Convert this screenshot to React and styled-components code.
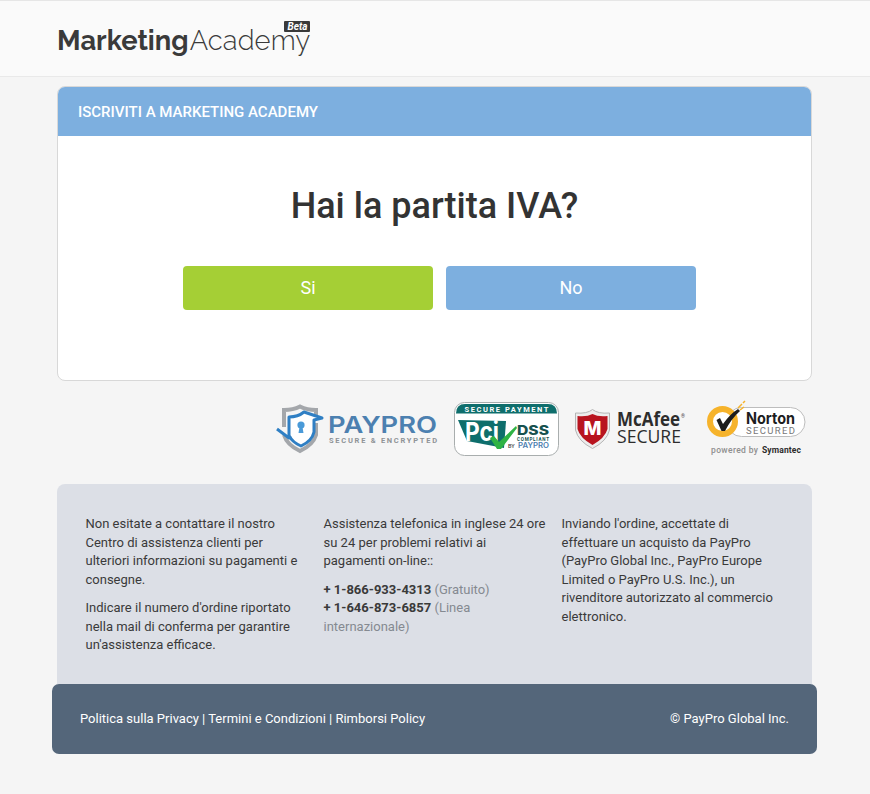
import React from "react"
import styled, { createGlobalStyle } from "styled-components"

const GlobalStyle = createGlobalStyle`
html, body {
  margin: 0;
  padding: 0;
  background: #f5f5f5;
  font-family: Roboto, "Liberation Sans", sans-serif;
  color: #333;
}
* { box-sizing: border-box; }
`
const TopBar = styled.header`
height: 77px;
background: #fafafa;
border-top: 1px solid #e6e6e6;
border-bottom: 1px solid #e9e9e9;
padding-left: 57px;
display: flex;
align-items: center;
`
const Logo = styled.div`
position: relative;
display: flex;
align-items: baseline;
font-family: Raleway, Lato, "Open Sans", sans-serif;
font-size: 27.3px;
line-height: 34px;
color: #3a3a3a;
margin-top: 2px;
`
const LogoBold = styled.span`
font-weight: 700;
`
const LogoLight = styled.span`
font-weight: 300;
margin-left: 1px;
letter-spacing: 0.15px;
`
const BetaTag = styled.span`
position: absolute;
top: -2px;
right: 0;
background: #3a3a3a;
color: #fff;
font: italic 700 10px/11px Roboto, sans-serif;
padding: 0 3px;
border-radius: 1px;
`
const Wrap = styled.main`
width: 755px;
margin: 9px 0 0 57px;
`
const Card = styled.section`
height: 295px;
background: #fff;
border: 1px solid #d8d8d8;
border-radius: 8px;
overflow: hidden;
`
const CardHead = styled.div`
height: 49px;
background: #7dafdf;
color: #fff;
font-size: 15px;
font-weight: 500;
line-height: 50px;
padding-left: 20px;
text-transform: uppercase;
`
const Question = styled.h1`
margin: 47px 0 37px;
font-size: 36px;
line-height: 46px;
font-weight: 500;
text-align: center;
color: #333;
`
const Choices = styled.div`
display: flex;
justify-content: center;
gap: 13px;
padding-left: 10px;
`
const Choice = styled.button`
width: 250px;
height: 44px;
padding: 0 0 2px;
border: 0;
border-radius: 4px;
background: ${p => p.$bg};
color: #fff;
font-family: inherit;
font-size: 18px;
font-weight: 400;
`
const Badges = styled.div`
height: 103px;
display: flex;
justify-content: flex-end;
align-items: center;
padding-bottom: 7px;
padding-right: 5px;
`
const Badge = styled.svg`
display: block;
flex: none;
overflow: visible;
margin-left: ${p => p.$gap || 0}px;
`
const Panel = styled.section`
background: #dcdfe6;
border-radius: 8px 8px 0 0;
height: 200px;
padding: 31px 0 0 28.5px;
display: grid;
grid-template-columns: repeat(3, 238px);
font-size: 13px;
line-height: 18.57px;
color: #3a3a3a;
`
const Col = styled.div`
width: ${p => p.$w}px;
`
const Para = styled.p`
margin: 0 0 10px;
`
const Phone = styled.b`
font-weight: 700;
`
const Muted = styled.span`
color: #858a91;
`
const BottomBar = styled.footer`
height: 70px;
margin: 0 -5px 30px;
padding: 0 28px 2px;
background: #54667a;
border-radius: 7px;
color: #fff;
font-size: 13px;
display: flex;
justify-content: space-between;
align-items: center;
`

const PayProBadge = () => (
  <Badge width="164" height="48" viewBox="0 0 164 48">
    <path d="M8 22 V5 Q17 5 24 1.5 Q31 5 40 5 V11 M40 18 V30 Q37 40 24 46 Q11 40 8 30" fill="none" stroke="#a4a7ab" strokeWidth="4" />
    <path d="M1 24 L13 33 V12 Q22 12 28 7 L46 13 L38 15 V27 Q36 36 25 41 Q16 37 13.5 31" fill="#fff" stroke="#2f7fc4" strokeWidth="3" strokeLinejoin="round" />
    <circle cx="25" cy="20" r="3.6" fill="#4a9ad8" />
    <path d="M23.7 21 L26.3 21 L27.5 28 L22.5 28 Z" fill="#4a9ad8" />
    <text x="52" y="28" fontFamily="Inter, sans-serif" fontSize="23" fontWeight="600" fill="#4c80b0" textLength="109" lengthAdjust="spacingAndGlyphs">PAYPRO</text>
    <text x="53" y="38" fontFamily="Roboto, sans-serif" fontSize="7.5" fontWeight="700" fill="#8f9397" textLength="108">SECURE &amp; ENCRYPTED</text>
  </Badge>
)
const PciBadge = () => (
  <Badge width="105" height="54" viewBox="0 0 105 54" $gap={14}>
    <rect x=".5" y=".5" width="104" height="53" rx="10" fill="#fff" stroke="#a9aeae" />
    <path d="M2 11.5 Q2 2 11 2 L94 2 Q103 2 103 11.5 Z" fill="#0e6e6c" />
    <text x="52.5" y="10" textAnchor="middle" fontFamily="Roboto, sans-serif" fontSize="7.5" fontWeight="700" fill="#fff" textLength="84">SECURE PAYMENT</text>
    <path d="M4 18 L52 19 L50 46 L13 39 Z" fill="#0e6e6c" />
    <text x="11" y="39" fontFamily="Inter, sans-serif" fontSize="26" fontWeight="700" fill="#fff" textLength="34" lengthAdjust="spacingAndGlyphs">Pci</text>
    <path d="M36 36 L40 34 L45 40 L62 24 L63 26 L47 47 L43 47 Z" fill="#2fb344" />
    <text x="63" y="33" fontFamily="Inter, sans-serif" fontSize="13" fontWeight="800" fill="#17524f" textLength="32" lengthAdjust="spacingAndGlyphs">DSS</text>
    <text x="63" y="38.5" fontFamily="Roboto, sans-serif" fontSize="4.6" fontWeight="700" fill="#17524f" textLength="32">COMPLIANT</text>
    <text x="54" y="46" fontFamily="Roboto, sans-serif" fontSize="5.5" fontWeight="500" fill="#444">BY</text>
    <text x="64" y="46" fontFamily="Inter, sans-serif" fontSize="7" fontWeight="600" fill="#4c80b0" textLength="31" lengthAdjust="spacingAndGlyphs">PAYPRO</text>
  </Badge>
)
const McAfeeBadge = () => (
  <Badge width="110" height="40" viewBox="0 0 110 40" $gap={16}>
    <path d="M.5 4 Q12 5 17.5 .5 Q23 5 34.5 4 L34.5 21 Q32 32 17.5 39.5 Q3 32 .5 21 Z" fill="#ededed" stroke="#b5b5b5" />
    <path d="M2.5 7 Q12 8 17.5 5 Q23 8 32.5 7 L32.5 20 Q30 29 17.5 36 Q5 29 2.5 20 Z" fill="#b8141f" />
    <text x="17.5" y="26" textAnchor="middle" fontFamily="Inter, sans-serif" fontSize="19" fontWeight="800" fill="#fff">M</text>
    <text x="42" y="17" fontFamily="Open Sans, sans-serif" fontSize="19" fontWeight="700" fill="#2d2d2d" textLength="63" lengthAdjust="spacingAndGlyphs">McAfee</text>
    <text x="106" y="9" fontFamily="Roboto, sans-serif" fontSize="5" fill="#444">®</text>
    <text x="42" y="34" fontFamily="Open Sans, sans-serif" fontSize="19" fill="#2d2d2d" textLength="64" lengthAdjust="spacingAndGlyphs">SECURE</text>
  </Badge>
)
const NortonBadge = () => (
  <Badge width="100" height="54" viewBox="0 0 100 54" $gap={22}>
    <rect x="20" y="5.5" width="78" height="29" rx="14.5" fill="#fff" stroke="#bdbdbd" />
    <circle cx="15.5" cy="19.5" r="12.5" fill="#fff" stroke="#f6b32b" strokeWidth="6" />
    <path d="M9.5 18 L13 16 L16 22 Q23 12 31 7 L33 9 Q24 17 18 29 L14.5 29 Z" fill="#1d1d1d" />
    <path d="M31 6 L35 2 M33 8 L37 5 M36 1 L38 -1" stroke="#f6b32b" strokeWidth="1.5" />
    <text x="39" y="22" fontFamily="Inter, sans-serif" fontSize="16" fontWeight="700" fill="#1d1d1d" textLength="49" lengthAdjust="spacingAndGlyphs">Norton</text>
    <text x="39" y="32" fontFamily="Roboto, sans-serif" fontSize="9.5" fill="#777" textLength="49">SECURED</text>
    <text x="4" y="50.5" fontFamily="Roboto, sans-serif" fontSize="8.5" fontWeight="500" fill="#8f8f8f" textLength="47">powered by</text>
    <text x="55" y="50.5" fontFamily="Roboto, sans-serif" fontSize="8.5" fontWeight="700" fill="#2d2d2d" textLength="39">Symantec</text>
  </Badge>
)

export default function App() {
  return (
    <>
      <GlobalStyle />
      <TopBar>
        <Logo>
          <LogoBold>Marketing</LogoBold>
          <LogoLight>Academy</LogoLight>
          <BetaTag>Beta</BetaTag>
        </Logo>
      </TopBar>
      <Wrap>
        <Card>
          <CardHead>Iscriviti a Marketing Academy</CardHead>
          <Question>Hai la partita IVA?</Question>
          <Choices>
            <Choice $bg="#a5cf35">Si</Choice>
            <Choice $bg="#7dafdf">No</Choice>
          </Choices>
        </Card>
        <Badges>
          <PayProBadge />
          <PciBadge />
          <McAfeeBadge />
          <NortonBadge />
        </Badges>
        <Panel>
          <Col $w={218}>
            <Para>Non esitate a contattare il nostro Centro di assistenza clienti per ulteriori informazioni su pagamenti e consegne.</Para>
            <Para>Indicare il numero d'ordine riportato nella mail di conferma per garantire un'assistenza efficace.</Para>
          </Col>
          <Col $w={226}>
            <Para>Assistenza telefonica in inglese 24 ore su 24 per problemi relativi ai pagamenti on-line::</Para>
            <Para>
              <Phone>+ 1-866-933-4313</Phone> <Muted>(Gratuito)</Muted><br />
              <Phone>+ 1-646-873-6857</Phone> <Muted>(Linea internazionale)</Muted>
            </Para>
          </Col>
          <Col $w={226}>
            <Para>Inviando l'ordine, accettate di effettuare un acquisto da PayPro (PayPro Global Inc., PayPro Europe Limited o PayPro U.S. Inc.), un rivenditore autorizzato al commercio elettronico.</Para>
          </Col>
        </Panel>
        <BottomBar>
          <span>Politica sulla Privacy | Termini e Condizioni | Rimborsi Policy</span>
          <span>© PayPro Global Inc.</span>
        </BottomBar>
      </Wrap>
    </>
  )
}
